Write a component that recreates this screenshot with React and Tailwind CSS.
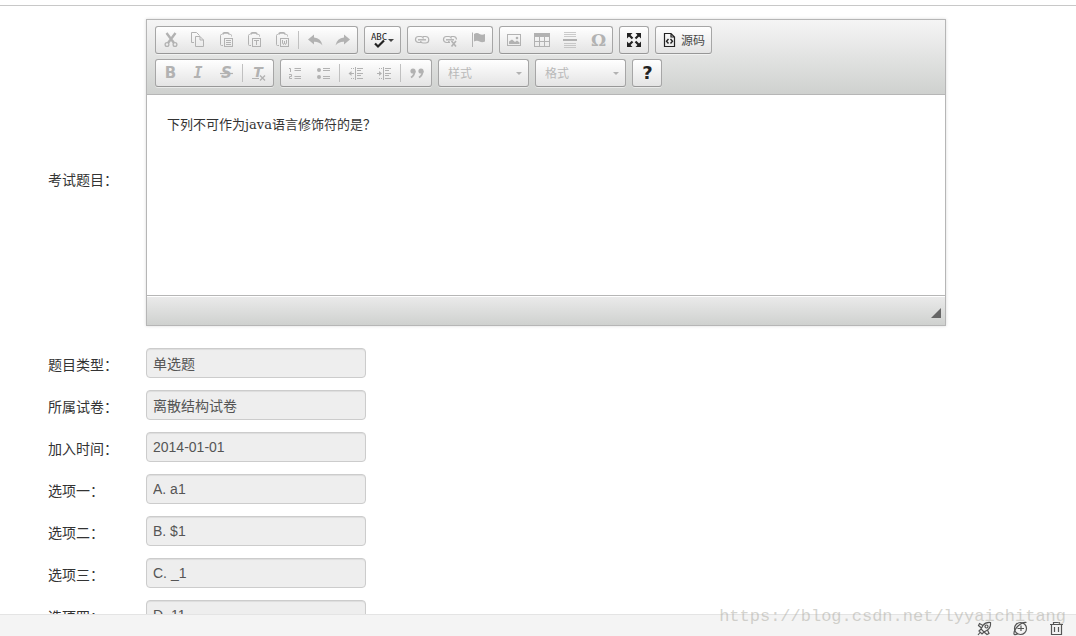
import clsx from 'clsx';

const fields = [
  { id: 'type', label: '题目类型：', value: '单选题' },
  { id: 'paper', label: '所属试卷：', value: '离散结构试卷' },
  { id: 'joined', label: '加入时间：', value: '2014-01-01' },
  { id: 'option1', label: '选项一：', value: 'A. a1' },
  { id: 'option2', label: '选项二：', value: 'B. $1' },
  { id: 'option3', label: '选项三：', value: 'C. _1' },
  { id: 'option4', label: '选项四：', value: 'D. 11' },
];

// All toolbar icons are drawn on a 16x16 grid
const Icon = ({ children }) => (
  <svg viewBox="0 0 16 16" className="h-4 w-4 shrink-0 overflow-visible" fill="none" stroke="currentColor" aria-hidden="true">
    {children}
  </svg>
);

const Glyph = ({ x, y, size, className, children }) => (
  <text x={x} y={y} fontSize={size} textAnchor="middle" fill="currentColor" stroke="none" className={className}>
    {children}
  </text>
);

const Clipboard = ({ children }) => (
  <Icon>
    <path d="M4 2.5H3.5Q2.5 2.5 2.5 3.5V12.5Q2.5 13.5 3.5 13.5H5M11.5 2.5H12.5Q13.5 2.5 13.5 3.5V4.5" />
    <path d="M5 2.5Q5 .8 6.5 .8H9.5Q11 .8 11 2.5" strokeWidth="1.7" />
    <rect x="6.5" y="6.5" width="8" height="8" />
    {children}
  </Icon>
);

const icons = {
  cut: (
    <Icon>
      <path d="M4.5 1L12 11M13.5 1L6 11" strokeWidth="2.4" />
      <circle cx="5" cy="12.5" r="1.9" strokeWidth="1.3" />
      <circle cx="13" cy="12.5" r="1.9" strokeWidth="1.3" />
    </Icon>
  ),
  copy: (
    <Icon>
      <path d="M4 10.5H1.5V.5H6.5L9.5 3.5" />
      <path d="M5.5 4.5H10L13.5 8V14.5H5.5ZM10 4.5V8H13.5" />
    </Icon>
  ),
  paste: (
    <Clipboard>
      <path d="M8 8.5H13M8 10.5H13M8 12.5H13" />
    </Clipboard>
  ),
  pasteText: (
    <Clipboard>
      <path d="M8 8.5H13M10.5 8.5V13" />
    </Clipboard>
  ),
  pasteWord: (
    <Clipboard>
      <path d="M8.5 8V11L9.5 12.5L10.5 11L11.5 12.5L12.5 11V8M10.5 9V11" />
    </Clipboard>
  ),
  undo: (
    <Icon>
      <path d="M1 7.5L7 2.5V5.5Q14 6 15.5 13.5Q12 9.5 7 9.8V12.5Z" fill="currentColor" stroke="none" />
    </Icon>
  ),
  redo: (
    <Icon>
      <path d="M15 7.5L9 2.5V5.5Q2 6 .5 13.5Q4 9.5 9 9.8V12.5Z" fill="currentColor" stroke="none" />
    </Icon>
  ),
  link: (
    <Icon>
      <path d="M7 10.5H4.5A3 3 0 0 1 4.5 4.5H7Q9 4.5 9.5 6.5M9 4.5H11.5A3 3 0 0 1 11.5 11H9Q7 11 6.5 9" strokeWidth="1.2" />
      <path d="M4 7.8H12" strokeWidth="1.4" />
    </Icon>
  ),
  unlink: (
    <Icon>
      <path d="M7 10.5H4.5A3 3 0 0 1 4.5 4.5H7Q9 4.5 9.5 6.5M9 4.5H11.5Q14.5 4.8 14.5 7.5M6.5 9Q7 10.5 8 10.5" strokeWidth="1.2" />
      <path d="M4 7.8H12" strokeWidth="1.4" />
      <path d="M9.5 9L14 14.5M14 9L9.5 14.5" strokeWidth="1.6" />
    </Icon>
  ),
  anchor: (
    <Icon>
      <path d="M2.5 .5V15" />
      <path d="M4 2Q7 0 9.5 2Q12 3.5 15 2V9.5Q12 11 9.5 9.5Q7 8 4 9.5Z" fill="currentColor" stroke="none" />
    </Icon>
  ),
  image: (
    <Icon>
      <rect x="1.5" y="2.5" width="13" height="11" />
      <path d="M3 12V9.5L6 7.5L9 10L11 8.5L13.5 10.5V12Z" fill="currentColor" stroke="none" />
      <circle cx="11" cy="6" r="1.3" fill="currentColor" stroke="none" />
    </Icon>
  ),
  table: (
    <Icon>
      <rect x=".5" y="1.5" width="15" height="13" />
      <path d="M0 1H16V5H0Z" fill="currentColor" stroke="none" />
      <path d="M5.5 5V14.5M10.5 5V14.5M.5 9.5H15.5" />
    </Icon>
  ),
  rule: (
    <Icon>
      <path d="M2 .5H14M2 2.5H14M2 4.5H14M2 11.5H14M2 13.5H14M2 15.5H14" strokeOpacity=".65" />
      <path d="M1 8H15" strokeWidth="2" />
    </Icon>
  ),
  omega: (
    <Icon>
      <Glyph x="8.5" y="14" size="17" className="font-['DejaVu_Serif'] font-bold">Ω</Glyph>
    </Icon>
  ),
  maximize: (
    <Icon>
      <path d="M2 2L6.5 6.5M14 2L9.5 6.5M2 14L6.5 9.5M14 14L9.5 9.5" strokeWidth="2.2" />
      <path d="M1 1H6.5L1 6.5ZM15 1H9.5L15 6.5ZM1 15H6.5L1 9.5ZM15 15H9.5L15 9.5Z" fill="currentColor" stroke="none" />
    </Icon>
  ),
  source: (
    <Icon>
      <path d="M2.5 1.5H9L12.5 5V14.5H2.5ZM9 1.5V5H12.5" strokeWidth="1.2" />
      <path d="M6.5 7L4.5 9.3L6.5 11.5M8.5 7L10.5 9.3L8.5 11.5" strokeWidth="1.4" />
    </Icon>
  ),
  spell: (
    <Icon>
      <Glyph x="8" y="8" size="9" className="font-['DejaVu_Sans_Mono']">ABC</Glyph>
      <path d="M4 11.5L7 14.5L13 8.5" strokeWidth="2.2" />
    </Icon>
  ),
  bold: (
    <Icon>
      <Glyph x="8.5" y="13" size="15" className="font-['DejaVu_Sans'] font-bold">B</Glyph>
    </Icon>
  ),
  italic: (
    <Icon>
      <Glyph x="8" y="13" size="15" className="font-['DejaVu_Sans_Mono'] font-bold italic">I</Glyph>
    </Icon>
  ),
  strike: (
    <Icon>
      <Glyph x="8.5" y="13" size="15" className="font-['DejaVu_Sans'] font-bold italic">S</Glyph>
      <path d="M2 8.5H15" strokeWidth="1.2" />
    </Icon>
  ),
  removeFormat: (
    <Icon>
      <Glyph x="7" y="12" size="14" className="font-['DejaVu_Sans'] font-bold italic">T</Glyph>
      <path d="M1 13.5H8" />
      <path d="M9 10.5L14 15.5M14 10.5L9 15.5" strokeWidth="1.4" />
    </Icon>
  ),
  numbered: (
    <Icon>
      <path d="M2 3.5H3.5V7M2 9.5H4.5V11.5H2.5V13.5H5M7.5 3.5H14M7.5 5.5H14M7.5 11.5H14M7.5 13.5H14" />
    </Icon>
  ),
  bulleted: (
    <Icon>
      <circle cx="4" cy="5" r="2" fill="currentColor" stroke="none" />
      <circle cx="4" cy="12" r="2" fill="currentColor" stroke="none" />
      <path d="M8 3.5H15M8 5.5H15M8 11.5H15M8 13.5H15" />
    </Icon>
  ),
  outdent: (
    <Icon>
      <path d="M7.5 2V15M9 3.5H15M9 5.5H13M9 8.5H15M9 10.5H13M9 13.5H15M1.5 8.5H6" />
      <path d="M3 3.5H4M5 3.5H6M3 13.5H4M5 13.5H6" />
      <path d="M.5 8.5L3.5 6V11Z" fill="currentColor" stroke="none" />
    </Icon>
  ),
  indent: (
    <Icon>
      <path d="M7.5 2V15M9 3.5H15M9 5.5H13M9 8.5H15M9 10.5H13M9 13.5H15M1 8.5H5" />
      <path d="M3 3.5H4M5 3.5H6M3 13.5H4M5 13.5H6" />
      <path d="M6 8.5L3 6V11Z" fill="currentColor" stroke="none" />
    </Icon>
  ),
  quote: (
    <Icon>
      <circle cx="4" cy="6" r="2.6" fill="currentColor" stroke="none" />
      <circle cx="12" cy="6" r="2.6" fill="currentColor" stroke="none" />
      <path d="M5.7 6Q5.5 10.5 2 12.5M13.7 6Q13.5 10.5 10 12.5" strokeWidth="1.9" />
    </Icon>
  ),
  help: (
    <Icon>
      <Glyph x="8.5" y="14" size="18" className="font-['DejaVu_Sans'] font-bold">?</Glyph>
    </Icon>
  ),
};

const Arrow = ({ className }) => (
  <svg viewBox="0 0 6 3" className={clsx('h-[3px] w-[6px]', className)} fill="currentColor" aria-hidden="true">
    <path d="M0 0H6L3 3Z" />
  </svg>
);

const Group = ({ children }) => (
  <div className="flex h-7 items-center rounded-[3px] border border-[#a6a6a6] border-b-[#979797] bg-linear-to-b from-white to-[#e4e4e4] shadow-[0_1px_0_rgba(255,255,255,0.5)]">
    {children}
  </div>
);

const Separator = () => <span className="mx-0.5 h-[18px] w-px bg-[#c0c0c0]" />;

const ToolButton = ({ icon, title, active, children }) => (
  <button
    type="button"
    title={title}
    aria-label={title}
    disabled={!active}
    className={clsx('flex h-[26px] items-center px-1.5', active ? 'text-[#222]' : 'text-[#b2b2b2]')}
  >
    {icons[icon]}
    {children}
  </button>
);

const Combo = ({ label }) => (
  <Group>
    <div className="relative w-[89px]">
      <select aria-label={label} disabled className="h-[26px] w-full appearance-none pt-0.5 pl-[9px] text-xs text-[#b9b9b9] opacity-100">
        <option>{label}</option>
      </select>
      <Arrow className="absolute top-3 right-1.5 text-[#b2b2b2]" />
    </div>
  </Group>
);

const Toolbar = () => (
  <div className="flex flex-col gap-[5px] border-b border-[#b6b6b6] bg-linear-to-b from-[#f5f5f5] to-[#cfd1cf] px-2 pt-1.5 pb-[7px]">
    <div className="flex flex-wrap gap-1.5">
      <Group>
        <ToolButton icon="cut" title="剪切" />
        <ToolButton icon="copy" title="复制" />
        <ToolButton icon="paste" title="粘贴" />
        <ToolButton icon="pasteText" title="粘贴为无格式文本" />
        <ToolButton icon="pasteWord" title="从 MS Word 粘贴" />
        <Separator />
        <ToolButton icon="undo" title="撤消" />
        <ToolButton icon="redo" title="重做" />
      </Group>
      <Group>
        <ToolButton icon="spell" title="即时拼写检查" active>
          <Arrow className="ml-px text-[#444]" />
        </ToolButton>
      </Group>
      <Group>
        <ToolButton icon="link" title="插入/编辑超链接" />
        <ToolButton icon="unlink" title="取消超链接" />
        <ToolButton icon="anchor" title="插入/编辑锚点链接" />
      </Group>
      <Group>
        <ToolButton icon="image" title="图像" />
        <ToolButton icon="table" title="表格" />
        <ToolButton icon="rule" title="插入水平线" />
        <ToolButton icon="omega" title="插入特殊符号" />
      </Group>
      <Group>
        <ToolButton icon="maximize" title="全屏" active />
      </Group>
      <Group>
        <ToolButton icon="source" title="源码" active>
          <span className="ml-[3px] pt-0.5 text-xs text-[#484848]">源码</span>
        </ToolButton>
      </Group>
    </div>
    <div className="flex flex-wrap gap-1.5">
      <Group>
        <ToolButton icon="bold" title="加粗" />
        <ToolButton icon="italic" title="倾斜" />
        <ToolButton icon="strike" title="删除线" />
        <Separator />
        <ToolButton icon="removeFormat" title="清除格式" />
      </Group>
      <Group>
        <ToolButton icon="numbered" title="编号列表" />
        <ToolButton icon="bulleted" title="项目列表" />
        <Separator />
        <ToolButton icon="outdent" title="减少缩进量" />
        <ToolButton icon="indent" title="增加缩进量" />
        <Separator />
        <ToolButton icon="quote" title="块引用" />
      </Group>
      <Combo label="样式" />
      <Combo label="格式" />
      <Group>
        <ToolButton icon="help" title="关于" active />
      </Group>
    </div>
  </div>
);

const Editor = () => (
  <div className="w-full max-w-[800px] border border-[#b6b6b6] shadow-[0_0_3px_rgba(0,0,0,0.15)]">
    <Toolbar />
    <textarea
      id="question"
      defaultValue="下列不可作为java语言修饰符的是？"
      className="block h-[200px] w-full resize-none bg-white p-5 font-['DejaVu_Serif','Noto_Sans_CJK_SC',serif] text-[13px] leading-5 text-[#333] outline-none"
    />
    <div className="flex h-[30px] items-center justify-end border-t border-[#b6b6b6] bg-linear-to-b from-[#ebebeb] to-[#cfd1cf] px-1 pt-1 shadow-[inset_0_1px_0_#fff]">
      <svg viewBox="0 0 10 10" className="h-2.5 w-2.5" aria-hidden="true">
        <path d="M10 0V10H0Z" fill="#666" />
      </svg>
    </div>
  </div>
);

const StatusBar = () => (
  <footer className="relative flex h-[22px] shrink-0 items-end justify-end gap-5 border-t border-[#e4e4e4] bg-[#f4f4f4] pr-3 text-[#555]">
    <button type="button" aria-label="加速">
      <svg viewBox="0 0 16 16" className="h-4 w-4" fill="none" stroke="currentColor" strokeWidth="1.2">
        <path d="M14.5 2.5Q9.5 2 7 5.5L5 9L8 12L11.5 10Q15 7.500 14.500 2.500ZM7 5.500L3.500 3.500L2.500 5.500L5.500 8M11.500 10L13 13.500L11 14.500L8 12M5 9L3 11L6 14L8 12M4 12.500L2 15" />
        <circle cx="10.500" cy="6.500" r="1.500" />
      </svg>
    </button>
    <button type="button" aria-label="浏览器">
      <svg viewBox="0 0 16 16" className="h-4 w-4" fill="none" stroke="currentColor" strokeWidth="1.2">
        <circle cx="8.5" cy="8.5" r="6" />
        <path d="M2 14.5Q1.500 11 5.500 6.500Q10 2 14.500 2.500M2 14.500Q4 15 6 13.500" />
        <path d="M5.500 8.500H12M9 5.500V11" />
      </svg>
    </button>
    <button type="button" aria-label="清除">
      <svg viewBox="0 0 16 16" className="h-4 w-4" fill="none" stroke="currentColor" strokeWidth="1.2">
        <path d="M2 4.500H15M5.500 4.500V2.500H11.500V4.500M3.500 4.500V14.500H13.500V4.500M6.500 7V12M10.500 7V12" />
      </svg>
    </button>
    <span className="pointer-events-none absolute right-2.5 bottom-[9px] font-['Liberation_Mono',monospace] text-[17px] leading-5 whitespace-nowrap text-[#aaa9a0]/50">
      https://blog.csdn.net/lyyaichitang
    </span>
  </footer>
);

const App = () => {
  return (
    <div className="flex h-screen flex-col bg-white font-['Liberation_Sans','Noto_Sans_CJK_SC',sans-serif] text-sm text-[#333]">
      <div className="h-1.5 shrink-0 border-b border-[#c8c8c8]" />
      <form className="flex min-h-0 flex-1 flex-col gap-2 overflow-hidden pt-[13px] pr-5 pl-12">
        <div className="flex shrink-0 items-center">
          <label htmlFor="question" className="w-[98px] shrink-0 leading-5">考试题目：</label>
          <div className="min-w-0 flex-1 pb-3.5">
            <Editor />
          </div>
        </div>
        {fields.map((field) => (
          <div key={field.id} className="flex shrink-0 items-start">
            <label htmlFor={field.id} className="w-[98px] shrink-0 pt-[7px] leading-5">{field.label}</label>
            <div className="pb-1">
              <input
                id={field.id}
                type="text"
                readOnly
                defaultValue={field.value}
                className="block h-[30px] w-[220px] rounded-[4px] border border-[#ccc] bg-[#eee] px-1.5 text-[#555] shadow-[inset_0_1px_1px_rgba(0,0,0,0.075)]"
              />
            </div>
          </div>
        ))}
      </form>
      <StatusBar />
    </div>
  );
};

export default App;
